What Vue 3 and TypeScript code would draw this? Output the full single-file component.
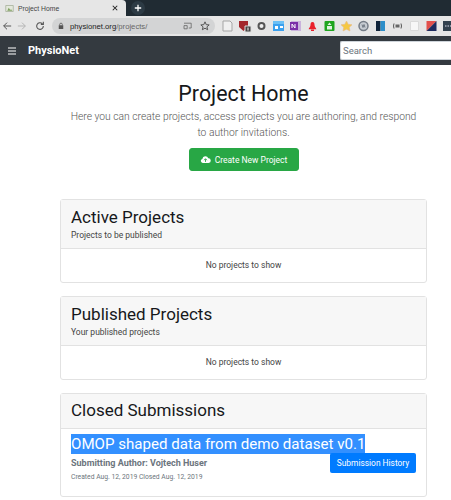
<script setup lang="ts">
const cards = [
  { title: 'Active Projects', sub: 'Projects to be published' },
  { title: 'Published Projects', sub: 'Your published projects' },
]
</script>

<template>
  <div class="page">
    <div class="tabstrip">
      <div class="tab">
        <svg class="favicon" viewBox="0 0 12 12"><path d="M1 2h10v8H1z" fill="#e4e8dc" stroke="#a3ad97" /><path d="M3 9l2-4 2 3 1-1 2 2z" fill="#7fa05f" /></svg>
        <span class="tab-title">Project Home</span>
        <svg class="tab-close" viewBox="0 0 8 8"><path d="M1 1l6 6M7 1L1 7" stroke="#222" stroke-width="1.4" /></svg>
      </div>
      <div class="new-tab">
        <svg viewBox="0 0 10 10"><path d="M5 1v8M1 5h8" stroke="#fff" stroke-width="1.6" /></svg>
      </div>
    </div>

    <div class="toolbar">
      <svg class="nav-icon" viewBox="0 0 12 12"><path d="M11 6H2M6 2L2 6l4 4" fill="none" stroke="#555" stroke-width="1.2" /></svg>
      <svg class="nav-icon" viewBox="0 0 12 12"><path d="M1 6h9M6 2l4 4-4 4" fill="none" stroke="#b5b5b5" stroke-width="1.2" /></svg>
      <svg class="nav-icon reload" viewBox="0 0 12 12"><path d="M10 6a4 4 0 1 1-1.200-2.800M10 1v3H7" fill="none" stroke="#555" stroke-width="1.3" /></svg>
      <div class="omnibox">
        <svg class="lock" viewBox="0 0 8 10"><path d="M1 4h6v5H1z" fill="#555" /><path d="M2.200 4V3a1.800 1.800 0 0 1 3.600 0v1" fill="none" stroke="#555" /></svg>
        <span class="url">physionet.org<span class="url-path">/projects/</span></span>
        <svg class="cast" viewBox="0 0 12 10"><path d="M1 1.500h9v6H7M1 8.500h4V4.500H1z" fill="none" stroke="#666" /></svg>
        <svg class="star" viewBox="0 0 12 12"><path d="M6 1l1.500 3.400 3.500.3-2.700 2.300.9 3.500L6 8.600 2.800 10.500l.9-3.500L1 4.700l3.500-.3z" fill="none" stroke="#555" stroke-width="1.200" /></svg>
      </div>
      <div class="extensions">
        <svg viewBox="0 0 17 14"><path d="M4 2h7l2 2v8H4z" fill="#f0f0f0" stroke="#a5a5a5" /></svg>
        <svg viewBox="0 0 17 14"><path d="M3 2h9v6l-4.500 4L3 8z" fill="#a3262b" /><path d="M9 7h6v6H9z" fill="#444" stroke="#ddd" /><path d="M12 8.500v3" stroke="#fff" /></svg>
        <svg viewBox="0 0 17 14"><circle cx="8.500" cy="7" r="3" fill="#eee" stroke="#555" stroke-width="2" /></svg>
        <svg viewBox="0 0 17 14"><path d="M3 2h11v10H3z" fill="#3ba0ee" /><path d="M3 2h11v3H3z" fill="#6cc0f5" /><path d="M5 7h3v3H5zM10 7h3v2h-3z" fill="#fff" /></svg>
        <svg viewBox="0 0 17 14"><path d="M4 2h10v10H4z" fill="#c9b3dc" /><path d="M3 3h8v8H3z" fill="#7b2fa8" /><path d="M5 9V5l3 4V5" fill="none" stroke="#fff" /></svg>
        <svg viewBox="0 0 17 14"><path d="M8.500 3c1.800 0 2 1.800 2 3 0 2 1.800 3 1.800 4.200H4.700C4.700 9 6.500 8 6.500 6c0-1.200.2-3 2-3z" fill="#e9202a" /><path d="M7 10.500h3V12H7z" fill="#e9202a" /></svg>
        <svg viewBox="0 0 17 14"><path d="M3.500 3a1 1 0 0 1 1-1h8a1 1 0 0 1 1 1v8a1 1 0 0 1-1 1h-8a1 1 0 0 1-1-1z" fill="#1fa51f" /><path d="M8.500 3.500l2 2.500h-4zM6 7h5v3.500H6z" fill="#dff3df" /></svg>
        <svg viewBox="0 0 17 14"><path d="M8.500 2l1.700 3.300 3.800.5-2.700 2.500.7 3.700-3.500-1.800L5 12l.7-3.700L3 5.800l3.800-.5z" fill="#f5c843" stroke="#e6b88a" stroke-width=".6" /></svg>
        <svg viewBox="0 0 17 14"><circle cx="8.500" cy="7" r="4.500" fill="#c7ccd2" stroke="#747c86" stroke-width="1.500" /><path d="M7 5.500l1 3 1-3 1 3" fill="none" stroke="#5b6570" stroke-width=".8" /></svg>
        <svg viewBox="0 0 17 14"><path d="M4 2h4.500v10H4z" fill="#10243a" /><path d="M8.500 2H13v10H8.500z" fill="#2d8ec9" /></svg>
        <svg viewBox="0 0 17 14"><path d="M6.500 5.500h4v3h-4z" fill="#666" /><path d="M5 4.500Q4 7 5 9.500M12 4.500Q13 7 12 9.500" fill="none" stroke="#555" /></svg>
        <svg viewBox="0 0 17 14"><path d="M4.500 2.500h8v9h-8z" fill="#f7f7f7" stroke="#dadada" /></svg>
        <svg viewBox="0 0 17 14"><path d="M3.500 2h10l-10 10z" fill="#e2504c" /><path d="M13.500 2v10h-10z" fill="#1d2a5e" /></svg>
        <svg viewBox="0 0 17 14"><path d="M3 2h11v10H3z" fill="#33424f" /><path d="M5 7h7" stroke="#dde" stroke-dasharray="1.500 1" /></svg>
      </div>
    </div>

    <nav class="navbar">
      <svg class="burger" viewBox="0 0 10 10"><path d="M1 2h8M1 5h8M1 8h8" stroke="#fff" stroke-width="1.200" /></svg>
      <span class="brand">PhysioNet</span>
      <input class="search" placeholder="Search" />
    </nav>

    <main class="content">
      <section class="hero">
        <h1>Project Home</h1>
        <p>Here you can create projects, access projects you are authoring, and respond to author invitations.</p>
        <button class="btn-create">
          <svg viewBox="0 0 16 12"><path d="M4 11a3 3 0 0 1-.6-5.900 4.500 4.500 0 0 1 8.600-.9A3.400 3.400 0 0 1 12.500 11z" fill="#fff" /><path d="M8 9.500V5.500M6 7l2-2.200L10 7" fill="none" stroke="#28a745" stroke-width="1.300" /></svg>
          Create New Project
        </button>
      </section>

      <section v-for="card in cards" :key="card.title" class="card">
        <header class="card-head">
          <h2>{{ card.title }}</h2>
          <small>{{ card.sub }}</small>
        </header>
        <div class="card-empty">No projects to show</div>
      </section>

      <section class="card">
        <header class="card-head closed">
          <h2>Closed Submissions</h2>
        </header>
        <div class="submission">
          <h3><mark>OMOP shaped data from demo dataset v0.1</mark></h3>
          <div class="sub-row">
            <div>
              <div class="author">Submitting Author: Vojtech Huser</div>
              <div class="dates">Created Aug. 12, 2019 Closed Aug. 12, 2019</div>
            </div>
            <button class="btn-history">Submission History</button>
          </div>
        </div>
      </section>
    </main>
  </div>
</template>

<style>
html, body { margin: 0; overflow: hidden; background: #fff; }
</style>

<style scoped>
.page {
  width: 451px;
  height: 500px;
  overflow: hidden;
  font-family: Roboto, "Noto Sans", sans-serif;
  color: #212529;
}

.tabstrip {
  height: 16px;
  background: #202b33;
  display: flex;
  align-items: center;
}
.tab {
  width: 126px;
  height: 16px;
  background: #e6e6e6;
  border-top-right-radius: 4px;
  display: flex;
  align-items: center;
  padding: 0 7px 0 5px;
  box-sizing: border-box;
}
.favicon { width: 9px; height: 9px; }
.tab-title { font-size: 6.800px; color: #444; margin-left: 4px; flex: 1; font-family: "Liberation Sans", sans-serif; }
.tab-close { width: 6px; height: 6px; margin-right: 1px; }
.new-tab {
  width: 14px;
  height: 14px;
  margin-left: 5px;
  display: flex;
  align-items: center;
  justify-content: center;
  border-radius: 50%;
  background: #2c3a44;
}
.new-tab svg { width: 8px; height: 8px; }

.toolbar {
  height: 20px;
  background: #e6e6e6;
  display: flex;
  align-items: center;
  padding-left: 2px;
}
.nav-icon { width: 10px; height: 10px; margin-right: 5px; flex: none; }
.nav-icon.reload { margin-left: 3px; }
.omnibox {
  margin-left: 2px;
  width: 163px;
  height: 16px;
  flex: none;
  border-radius: 8px;
  background: #d3d4d5;
  display: flex;
  align-items: center;
  padding: 0 5px 0 6px;
  box-sizing: border-box;
}
.lock { width: 6px; height: 8px; }
.url { font: 7.700px "Liberation Sans", sans-serif; color: #222; margin-left: 6px; flex: 1; }
.url-path { color: #666; }
.cast { width: 10px; height: 8px; margin-right: 7px; }
.star { width: 10px; height: 10px; }
.extensions {
  display: flex;
  align-items: center;
  margin-left: 3.500px;
  flex: none;
}
.extensions svg { width: 17px; height: 14px; flex: none; }

.navbar {
  height: 29px;
  background: #343a40;
  display: flex;
  align-items: center;
  padding-left: 7px;
}
.burger { width: 10px; height: 10px; }
.brand { color: #fff; font-size: 11px; font-weight: 700; margin-left: 11px; flex: 1; }
.search {
  width: 111px;
  height: 19px;
  box-sizing: border-box;
  border: 1px solid #ced4da;
  border-right: 0;
  border-radius: 2px 0 0 2px;
  padding: 0 2px;
  font-family: Roboto, sans-serif;
  font-size: 9.500px;
  outline: none;
}
.search::placeholder { color: #6c757d; }

.content {
  padding: 0 24px 0 60px;
}
.hero {
  text-align: center;
  padding-top: 15px;
  height: 134px;
  box-sizing: border-box;
  margin: 0 -26px;
}
.hero h1 {
  margin: 0;
  font-size: 21.400px;
  line-height: 28px;
  font-weight: 400;
  color: #16181b;
}
.hero p {
  margin: 1px 0 0;
  font-size: 10.300px;
  line-height: 16px;
  font-weight: 300;
  color: #555;
  padding: 0 34px;
}
.btn-create {
  margin-top: 7px;
  width: 110px;
  height: 23px;
  border: 1px solid #28a745;
  border-radius: 3px;
  background: #28a745;
  color: #fff;
  font-family: inherit;
  font-size: 8.500px;
  display: inline-flex;
  align-items: center;
  justify-content: center;
  gap: 4px;
  padding: 0;
}
.btn-create svg { width: 11px; height: 9px; }

.card {
  border: 1px solid #e2e2e2;
  border-radius: 3px;
  margin-bottom: 13px;
}
.card-head {
  background: #f7f7f7;
  border-bottom: 1px solid #e2e2e2;
  padding: 6px 10px;
}
.card-head h2 {
  margin: 0;
  font-size: 17px;
  line-height: 22px;
  font-weight: 400;
  color: #16181b;
}
.card-head small {
  display: block;
  margin-top: 1px;
  font-size: 8.500px;
  line-height: 13px;
  color: #444;
}
.card-head.closed { padding: 5px 10px 7px; }
.card-empty {
  text-align: center;
  font-size: 8.500px;
  line-height: 13px;
  padding: 10px 0;
  color: #444;
}
.submission {
  padding: 5px 10px 0;
  height: 67px;
  box-sizing: border-box;
}
.submission h3 {
  margin: 0;
  font-size: 15.100px;
  line-height: 20px;
  font-weight: 400;
}
mark { background: #3390ff; color: #fff; padding: 1px 0; }
.sub-row {
  display: flex;
  justify-content: space-between;
  align-items: flex-start;
}
.author { font-size: 9px; font-weight: 700; color: #6c757d; line-height: 13px; margin-top: 2.500px; }
.dates { font-size: 6.750px; color: #6c757d; margin-top: 3px; }
.btn-history {
  width: 86px;
  height: 20px;
  margin-top: -1px;
  border: 0;
  border-radius: 2px;
  background: #007bff;
  color: #fff;
  font-family: inherit;
  font-size: 8.400px;
  padding: 0;
}
</style>
